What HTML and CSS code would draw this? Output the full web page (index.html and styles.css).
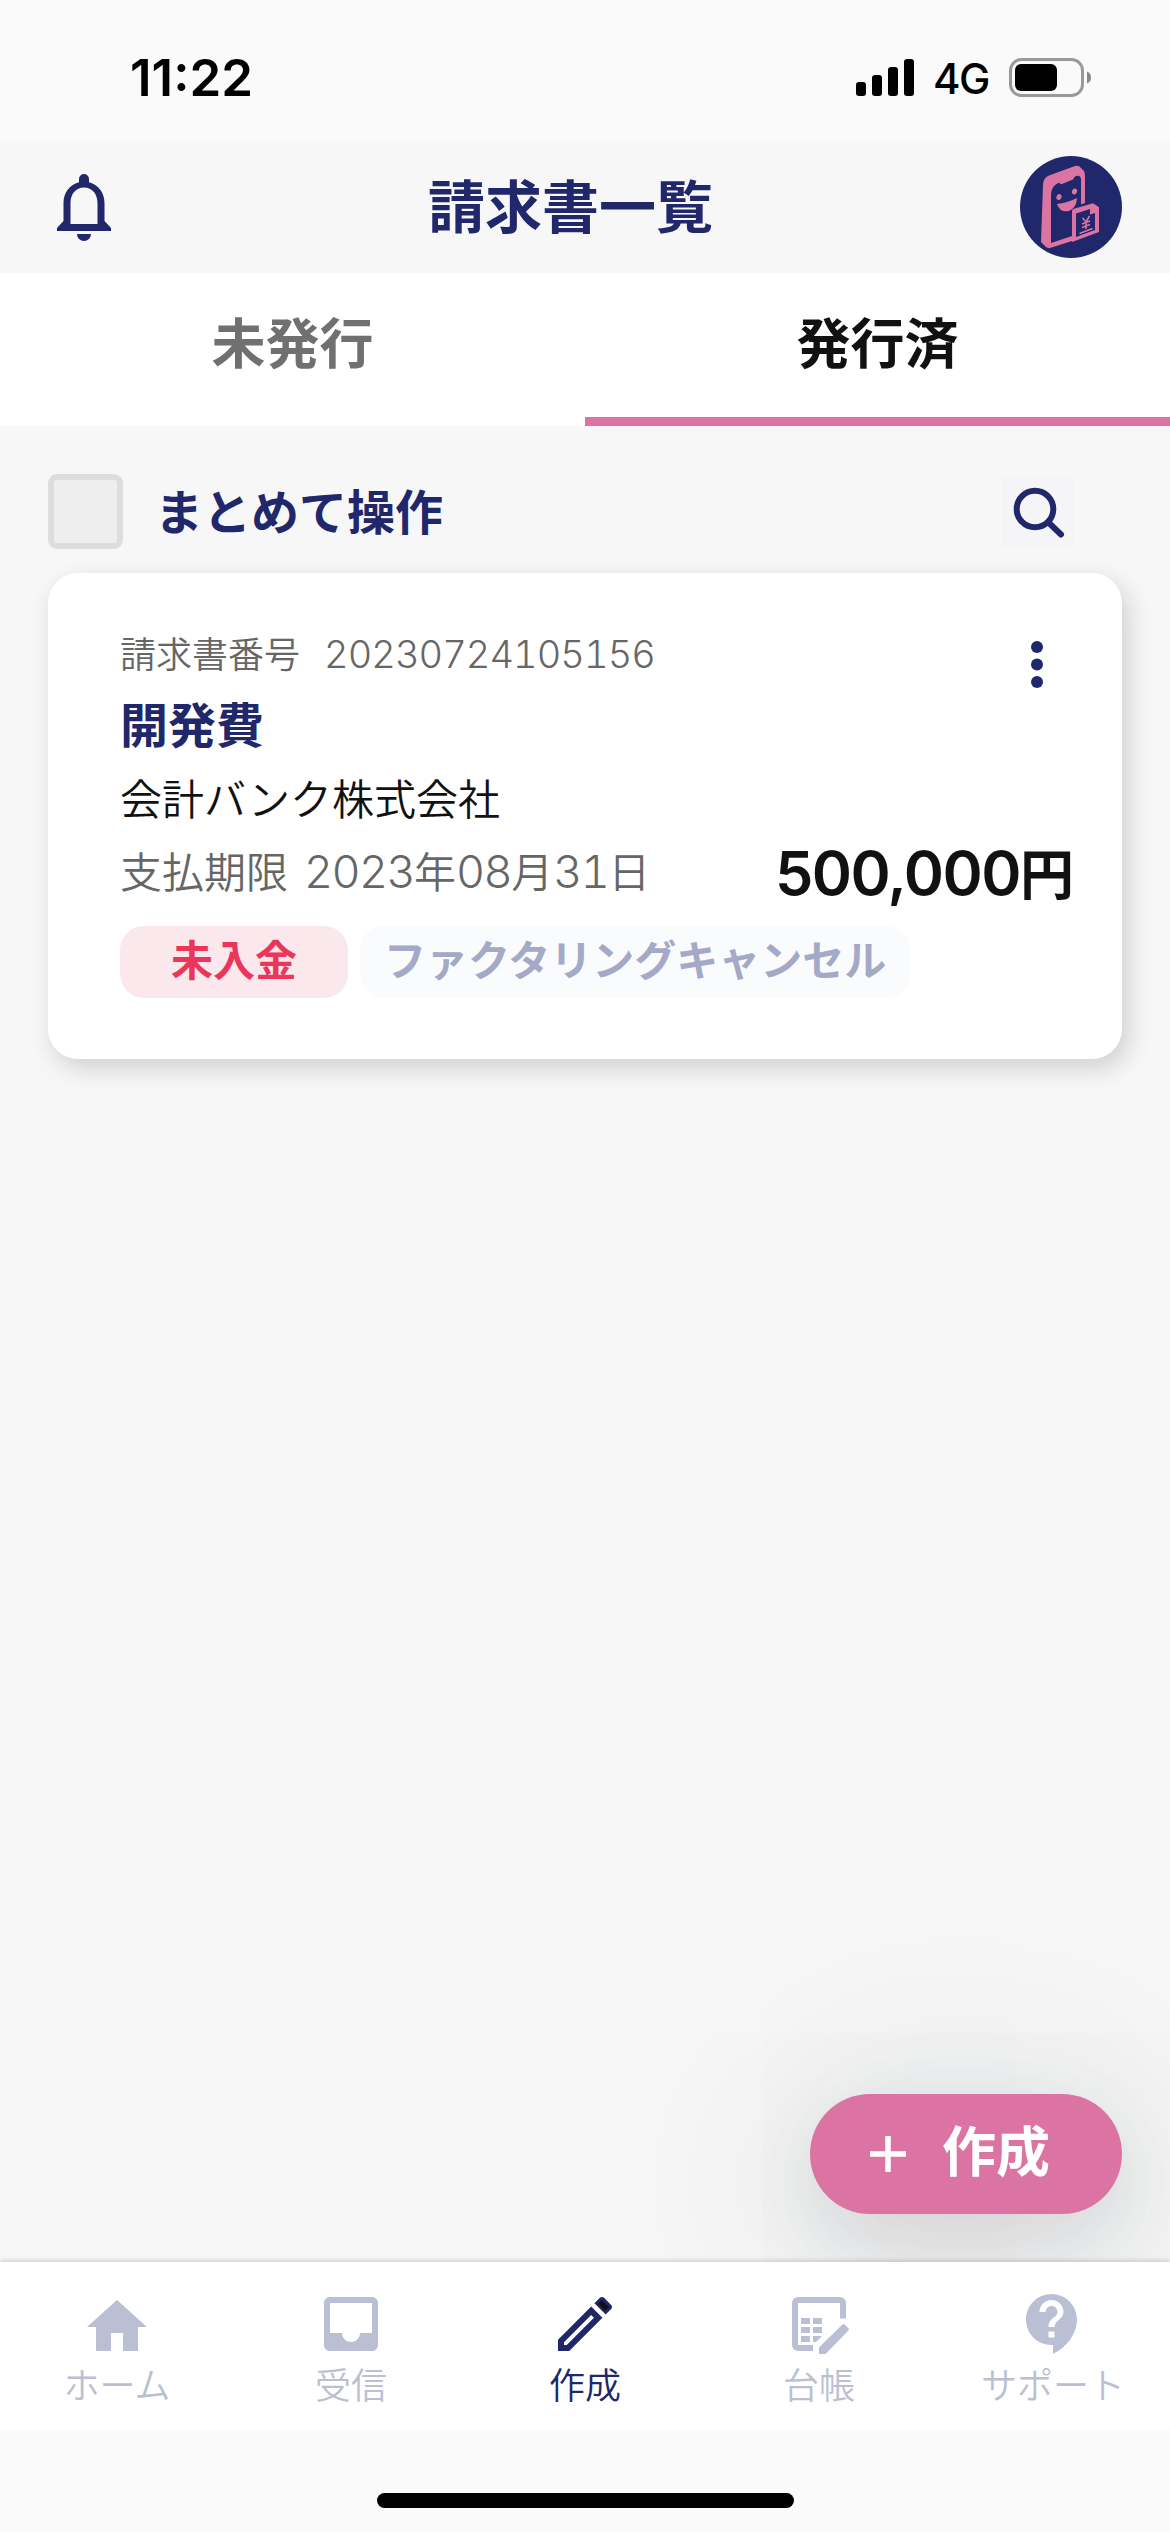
FILE: index.html
```html
<!DOCTYPE html>
<html lang="ja">
<head>
<meta charset="utf-8">
<title>請求書一覧</title>
<link rel="stylesheet" href="styles.css">
</head>
<body>
<div class="screen">
  <div class="status">
    <span class="time">11:22</span>
    <div class="status-right">
      <svg class="signal" width="58" height="37" viewBox="0 0 58 37"><rect x="0" y="23" width="10" height="14" rx="3"/><rect x="16" y="16" width="10" height="21" rx="3"/><rect x="32" y="8" width="10" height="29" rx="3"/><rect x="48" y="0" width="10" height="37" rx="3"/></svg>
      <span class="network">4G</span>
      <svg class="battery" width="82" height="39" viewBox="0 0 82 39"><rect x="1.5" y="1.5" width="72" height="36" rx="11" fill="none" stroke="#999" stroke-width="3"/><rect x="6" y="6" width="42" height="27" rx="6"/><path d="M78 13.500q4 1.500 4 6t-4 6z" fill="#888"/></svg>
    </div>
  </div>

  <header class="header">
    <svg class="bell" width="54" height="67" viewBox="0 0 54 67"><path fill="#20276b" fill-rule="evenodd" d="M27 0a5 5 0 0 1 5 5v3.200C42 11 47.500 19 47.500 29v18l6.500 7v3H0v-3l6.500-7V29C6.500 19 12 11 22 8.200V5a5 5 0 0 1 5-5zM27 13.500c-8.500 0-13.500 7-13.500 15.500v21h27V29c0-8.500-5-15.500-13.500-15.500zM20 60h14a7 7 0 0 1-14 0z"/></svg>
    <h1 class="title">請求書一覧</h1>
    <svg class="avatar" width="102" height="102" viewBox="0 0 102 102">
      <circle cx="51" cy="51" r="51" fill="#20276b"/>
      <path fill="#db74a3" fill-rule="evenodd" d="M23 29q0-7 6-9.500L55 10q4-1 6 2l3 3q1 2 1 5v27l-4 1.500V24q0-5-5-4-2 .7-3 3.500l-11 4.500q-2 1-2.500-1.500-8 3-8.500 11.500v49l21-7V85l-22 7q-2 .5-4-1l-5-5z"/>
      <path fill="#db74a3" fill-rule="evenodd" d="M52 55q0-1.500 2-2.300l19-5.500 6 4V76L52 86zM56 57.500V81l19-7V57l-5 1.500V53z"/>
      <path d="M37 48q10-1 20-6-.5 10-8 13-9 2-12-7z" fill="#db74a3"/>
      <ellipse cx="39" cy="41" rx="2.500" ry="3" transform="rotate(25 39 41)" fill="#db74a3"/><ellipse cx="54.500" cy="35.500" rx="2.500" ry="3" transform="rotate(25 54.500 35.500)" fill="#db74a3"/>
      <path d="M62.500 62l3.500 4 3.500-6M66 66v7M62 68l8-3M62 71.500l8-3M59.500 77.500l13-5M59.500 81l13-5" fill="none" stroke="#db74a3" stroke-width="1.600"/>
    </svg>
  </header>

  <nav class="tabs"><span class="tab">未発行</span><span class="tab tab-active">発行済</span></nav>

  <main class="content">
    <div class="toolbar">
      <span class="checkbox"></span>
      <span class="bulk">まとめて操作</span>
      <svg class="search" width="72" height="72" viewBox="0 0 72 72" fill="none" stroke="#20276b" stroke-width="6"><circle cx="33" cy="33" r="18.300"/><path d="M46.500 46.500L59 58.500" stroke-linecap="round"/></svg>
    </div>

    <article class="card">
      <div class="card-top">
        <div class="number"><span>請求書番号</span><span class="digits">20230724105156</span></div>
        <svg class="more" width="12" height="47" viewBox="0 0 12 47" fill="#20276b"><circle cx="6" cy="6" r="6"/><circle cx="6" cy="23.500" r="6"/><circle cx="6" cy="41" r="6"/></svg>
      </div>
      <h2 class="subject">開発費</h2>
      <div class="client">会計バンク株式会社</div>
      <div class="due-row">
        <div class="due"><span class="due-label">支払期限</span><span class="d">2023</span>年<span class="d">08</span>月<span class="d">31</span>日</div>
        <div class="amount"><span class="yen-value">500,000</span>円</div>
      </div>
      <div class="tags"><span class="tag tag-unpaid">未入金</span><span class="tag tag-cancel">ファクタリングキャンセル</span></div>
    </article>

    <div class="fab-row">
      <div class="fab">
        <svg width="36" height="36" viewBox="0 0 36 36" stroke="#fff" stroke-width="5.500"><path d="M18 0v36M0 18h36"/></svg>
        <span class="fab-label">作成</span>
      </div>
    </div>
  </main>

  <nav class="bottom-nav">
    <div class="item"><svg class="icon" viewBox="0 0 24 24"><path d="M10 21v-6h4v6h5v-8h3L12 4 2 13h3v8z"/></svg><span class="label">ホーム</span></div>
    <div class="item"><svg class="icon" viewBox="0 0 24 24"><path d="M19 3H5c-1.100 0-2 .9-2 2v14c0 1.100.9 2 2 2h14c1.100 0 2-.9 2-2V5c0-1.100-.9-2-2-2zm0 12h-4c0 1.660-1.340 3-3 3s-3-1.340-3-3H5V5h14v10z"/></svg><span class="label">受信</span></div>
    <div class="item item-active"><svg class="icon" viewBox="0 0 24 24"><path d="M14.060 9.020l.92.92L5.920 19H5v-.92l9.060-9.060M17.660 3c-.25 0-.51.1-.7.290l-1.830 1.830 3.750 3.750 1.830-1.830c.39-.39.39-1.020 0-1.410l-2.340-2.340c-.2-.2-.45-.29-.71-.29zm-3.600 3.190L3 17.250V21h3.750L17.810 9.940l-3.750-3.750z"/><path d="M17.600 4L16.300 5.300 18.700 7.700 20 6.400z" fill="#111"/></svg><span class="label">作成</span></div>
    <div class="item"><svg class="icon" viewBox="0 0 24 24"><path d="M5 3h14a2 2 0 0 1 2 2v5.200h-2V5H5v14h5v2H5a2 2 0 0 1-2-2V5a2 2 0 0 1 2-2zM6 10h3v2H6zM10 10h3v2h-3zM6 13h3v2H6zM10 13h3v2h-3zM6 16h3v2H6zM10 16h3l-2 2h-1zM12 22v-2.200l7.800-7.600q.4-.4.8 0l1.200 1.200q.4.400 0 .8L14.200 22z"/></svg><span class="label">台帳</span></div>
    <div class="item"><svg class="icon" viewBox="0 0 24 24"><path d="M11.500 2C6.810 2 3 5.810 3 10.500S6.810 19 11.500 19h.5v3c4.860-2.340 8-7 8-11.500C20 5.810 16.190 2 11.500 2zm1 14.500h-2v-2h2v2zm0-3.500h-2c0-3.250 3-3 3-5 0-1.100-.9-2-2-2s-2 .9-2 2h-2c0-2.210 1.790-4 4-4s4 1.790 4 4c0 2.500-3 2.750-3 5z"/></svg><span class="label">サポート</span></div>
  </nav>
  <div class="home-area"><span class="home-bar"></span></div>
</div>
</body>
</html>
```
FILE: styles.css
```css
* { box-sizing: border-box; }
body { margin: 0; background: #f7f7f7; font-family: Inter, "Noto Sans CJK JP", sans-serif; color: #111; }
svg { display: block; flex: none; }
h1, h2 { margin: 0; }
.screen { width: 1170px; height: 2532px; display: flex; flex-direction: column; overflow: hidden; white-space: nowrap; }

.status { flex: none; height: 141px; padding: 14px 79px 0 130px; background: #fafafa; display: flex; align-items: center; justify-content: space-between; color: #000; }
.time { font-size: 51px; font-weight: 600; letter-spacing: 0; }
.status-right { display: flex; align-items: center; }
.network { margin: 0 20px 0 19px; font-size: 42px; font-weight: 500; line-height: 40px; letter-spacing: -1.5px; padding-top: 3px; }

.header { flex: none; height: 132px; padding: 0 48px 0 57px; display: flex; align-items: center; justify-content: space-between; }
.title { width: 285px; margin-left: 10px; font-size: 57px; line-height: 80px; font-weight: 700; color: #20276b; padding-top: 1px; }

.tabs { flex: none; height: 153px; background: #fff; display: grid; grid-template-columns: 1fr 1fr; }
.tab { text-align: center; font-size: 54px; line-height: 144px; font-weight: 700; color: #707070; }
.tab-active { color: #111; border-bottom: 9px solid #db74a3; }

.content { flex: 1; padding: 48px 48px 0; display: flex; flex-direction: column; }
.toolbar { height: 75px; display: flex; align-items: center; }
.checkbox { width: 75px; height: 75px; background: #eee; border: 6px solid #dcdedd; border-radius: 9px; }
.bulk { margin-left: 32px; padding-top: 3px; font-size: 48px; line-height: 70px; font-weight: 700; color: #20276b; }
.search { margin-left: auto; margin-right: 48px; background: #f5f5f8; }

.card { height: 486px; margin-top: 24px; padding: 51px 48px 0 72px; background: #fff; border-radius: 30px; box-shadow: 6px 9px 24px rgba(20, 20, 35, .17); }
.card-top { height: 60px; display: flex; justify-content: space-between; align-items: flex-start; }
.number { display: flex; align-items: baseline; gap: 24px; font-size: 36px; line-height: 60px; font-weight: 350; color: #666; }
.digits { font-size: 38px; letter-spacing: -.95px; font-feature-settings: "tnum"; }
.more { margin: 17px 31px 0 0; }
.subject { font-size: 48px; line-height: 72px; font-weight: 700; color: #20276b; margin-top: 6px; }
.client { font-size: 42px; line-height: 72px; margin-top: 2px; font-weight: 350; }
.due-row { height: 72px; display: flex; justify-content: space-between; align-items: center; }
.due { font-size: 42px; line-height: 72px; font-weight: 350; color: #666; }
.due-label { margin-right: 16px; }
.d { font-size: 45px; letter-spacing: -1.6px; font-feature-settings: "tnum"; }
.amount { font-size: 54px; line-height: 72px; font-weight: 600; padding-top: 5px; }
.yen-value { font-size: 61px; letter-spacing: -1.5px; }
.tags { margin-top: 18px; display: flex; gap: 12px; }
.tag { height: 72px; border-radius: 24px; font-size: 42px; line-height: 70px; font-weight: 700; }
.tag-unpaid { padding: 0 51px; background: #fae8ec; color: #eb365a; }
.tag-cancel { padding: 0 24px; background: #fafbfd; color: #a5a9c8; }

.fab-row { margin-top: auto; margin-bottom: 48px; display: flex; justify-content: flex-end; }
.fab { width: 312px; height: 120px; padding-left: 60px; border-radius: 60px; background: #db74a3; color: #fff; display: flex; align-items: center; gap: 36px; box-shadow: 0 24px 72px rgba(20, 20, 25, .09), 0 27px 210px 45px rgba(20, 25, 45, .1); }
.fab-label { font-size: 54px; line-height: 80px; font-weight: 700; padding-bottom: 2px; }

.bottom-nav { flex: none; height: 168px; position: relative; background: #fff; display: grid; grid-template-columns: repeat(5, 1fr); padding-top: 26px; box-shadow: 0 -2px 4px rgba(0, 0, 0, .14); }
.item { display: flex; flex-direction: column; align-items: center; color: #bbbfd3; }
.item-active { color: #20276b; }
.icon { width: 72px; height: 72px; fill: currentColor; }
.label { font-size: 36px; line-height: 52px; font-weight: 350; }
.home-area { flex: none; position: relative; height: 102px; background: #fafafa; display: flex; justify-content: center; align-items: flex-end; padding-bottom: 24px; }
.home-bar { width: 417px; height: 15px; border-radius: 8px; background: #000; }
```
